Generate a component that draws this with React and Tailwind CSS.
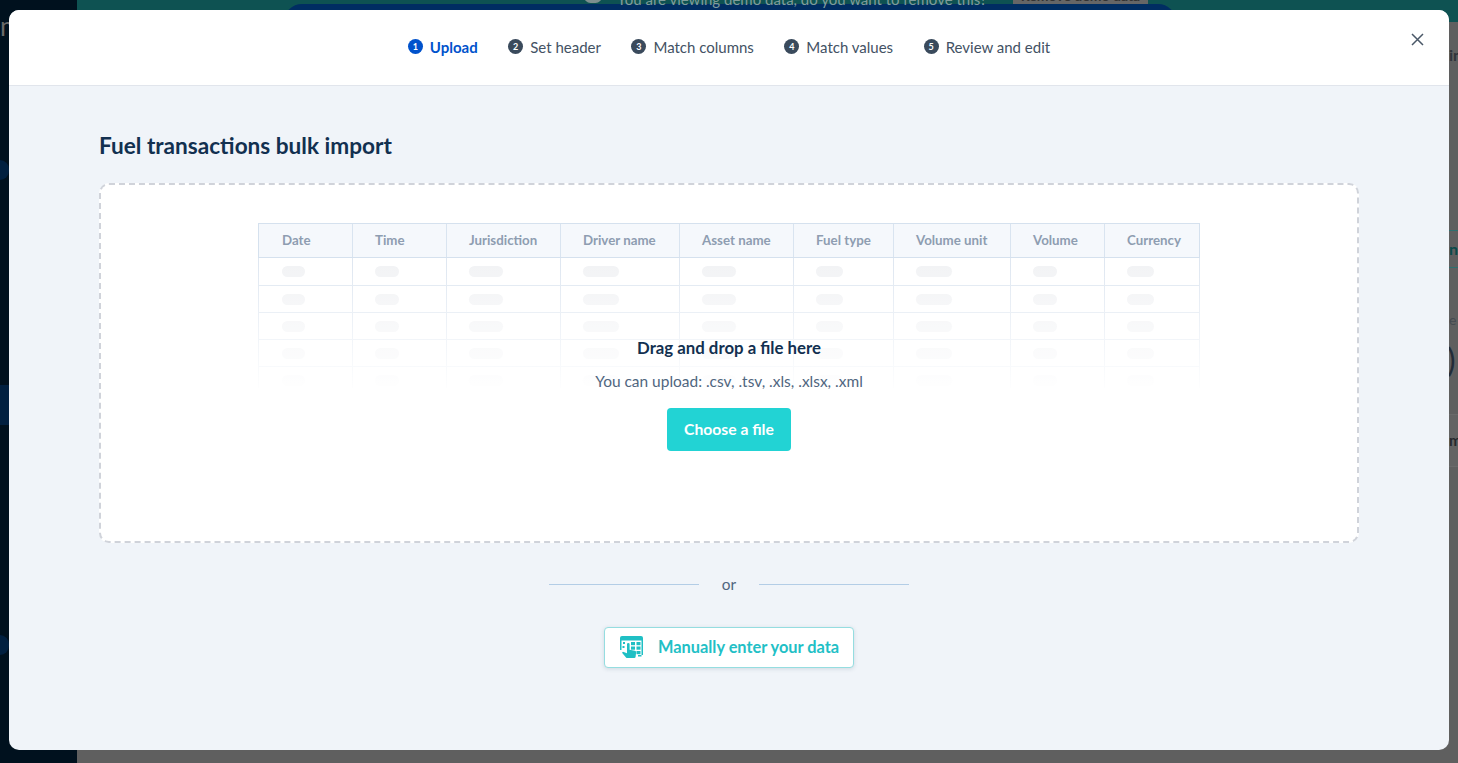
import React from "react";

const columns = [
  { name: "Date", w: "w-[93px]", bar: "w-[23px]" },
  { name: "Time", w: "w-[94px]", bar: "w-[24px]" },
  { name: "Jurisdiction", w: "w-[114px]", bar: "w-[34px]" },
  { name: "Driver name", w: "w-[119px]", bar: "w-[36px]" },
  { name: "Asset name", w: "w-[114px]", bar: "w-[34px]" },
  { name: "Fuel type", w: "w-[100px]", bar: "w-[27px]" },
  { name: "Volume unit", w: "w-[117px]", bar: "w-[36px]" },
  { name: "Volume", w: "w-[94px]", bar: "w-[24px]" },
  { name: "Currency", w: "w-[95px]", bar: "w-[27px]" },
];

const steps = [
  { n: 1, label: "Upload", active: true },
  { n: 2, label: "Set header" },
  { n: 3, label: "Match columns" },
  { n: 4, label: "Match values" },
  { n: 5, label: "Review and edit" },
];

const rows = [
  { id: 0, h: "h-[28px]" },
  { id: 1, h: "h-[27px]" },
  { id: 2, h: "h-[27px]" },
  { id: 3, h: "h-[27px]" },
  { id: 4, h: "h-[27px]" },
];

function Step({ n, label, active }) {
  return (
    <div className="flex items-center gap-[7px]">
      <span
        className={`flex h-[15px] w-[15px] items-center justify-center rounded-full text-[9px] font-bold leading-none text-white ${
          active ? "bg-[#0052cc]" : "bg-[#3a4a5c]"
        }`}
      >
        {n}
      </span>
      <span className={`text-[15px] leading-5 ${active ? "font-bold text-[#0052cc]" : "text-[#435264]"}`}>{label}</span>
    </div>
  );
}

function SheetIcon() {
  return (
    <svg width="23" height="22" viewBox="0 0 23 22" fill="none">
      <g fill="#1fbfc4">
        <path d="M2 0h19a2 2 0 0 1 2 2v2.600H0V2a2 2 0 0 1 2-2z" />
        <rect x="0" y="4" width="1.500" height="10" />
        <rect x="21.500" y="4" width="1.500" height="15" />
        <rect x="3" y="6" width="2" height="2" />
        <rect x="2.500" y="10" width="2" height="2" />
        <rect x="11" y="6" width="4" height="3.200" />
        <rect x="16.500" y="6" width="4" height="3.200" />
        <rect x="11" y="10.500" width="4" height="3.200" />
        <rect x="16.500" y="10.500" width="4" height="3.200" />
        <rect x="16.500" y="15" width="4" height="3.200" />
        <rect x="18" y="19" width="3.500" height="1.500" />
        <path d="M7 8.200a1.300 1.300 0 0 1 2.600 0v5.600l5.200 1c.9.2 1.400.9 1.300 1.700l-.5 4.300a1.300 1.300 0 0 1-1.300 1.200H7.200c-.5 0-.9-.2-1.200-.6l-4-4.600 1-1.100 4 1.600z" />
      </g>
    </svg>
  );
}

export default function App() {
  return (
    <div className="relative h-[763px] w-[1458px] overflow-hidden bg-[#5f5f5f] font-['Lato','Noto_Sans',sans-serif]">
      {/* page dimmed behind the dialog */}
      <div className="flex h-full">
        <aside className="flex h-full w-[77px] flex-col bg-[#00111e]">
          <span className="pt-[14px] text-[26px] leading-6 text-[#6a6a6a]">m</span>
          <div className="mt-[122px] h-[20px] w-[9px] rounded-r-full bg-[#012040]" />
          <div className="mt-[205px] h-[40px] w-[9px] bg-[#012040]" />
          <div className="mt-[210px] h-[20px] w-[9px] rounded-r-full bg-[#012040]" />
        </aside>
        <main className="flex-1">
          <div className="flex h-[22px] justify-center bg-[#0e5252] pr-[76px]">
            <div className="mt-[4px] h-[18px] w-[892px] rounded-t-[18px] bg-[#002d62]" />
          </div>
        </main>
      </div>
      <div className="absolute left-[584px] top-[-10px] h-[13px] w-[18px] rounded-full bg-[#7d8f8f]" />
      <div className="absolute left-[617px] top-[-11px] text-[15px] leading-5 text-[#7f9c9c]">You are viewing demo data, do you want to remove this?</div>
      <div className="absolute left-[1013px] top-[-12px] flex h-[16px] w-[135px] items-end justify-center bg-[#666666] text-[14px] font-bold leading-4 text-[#333]">Remove demo data</div>
      <div className="absolute left-[1449px] top-[45px] text-[16px] font-bold leading-5 text-[#30343a]">in</div>
      <div className="absolute left-[1449px] top-[230px] flex h-[38px] w-[9px] items-center border-y border-[#2f6f6f] text-[16px] font-bold text-[#0a4a4a]">n</div>
      <div className="absolute left-[1449px] top-[310px] text-[14px] leading-5 text-[#454a50]">e</div>
      <div className="absolute left-[1447px] top-[340px] text-[32px] leading-10 text-[#222c38]">)</div>
      <div className="absolute left-[1449px] top-[414px] flex h-[53px] w-[9px] items-center border-y border-[#6a6a6a] bg-[#636363] text-[15px] font-bold text-[#25282c]">m</div>

      {/* dialog */}
      <div className="absolute left-[9px] top-[10px] flex h-[740px] w-[1440px] flex-col overflow-hidden rounded-[10px] bg-[#f0f4f9]">
        <header className="relative flex h-[76px] shrink-0 items-center justify-center gap-[30.500px] border-b border-[#e1e5ec] bg-white pb-[2px]">
          {steps.map((s) => (
            <Step key={s.n} {...s} />
          ))}
          <button className="absolute right-[25px] top-[23px] text-[#4a5868]">
            <svg width="13" height="13" viewBox="0 0 13 13" fill="none" stroke="currentColor" strokeWidth="1.500">
              <path d="M1 1l11 11M12 1L1 12" />
            </svg>
          </button>
        </header>

        <div className="flex flex-col px-[90px]">
          <h1 className="mt-[45px] text-[22.600px] font-bold leading-[30px] text-[#123050]">Fuel transactions bulk import</h1>

          <section className="relative mt-[22px] h-[360px] w-[1260px] rounded-[10px] border-2 border-dashed border-[#d0d3da] bg-white pt-[38px]">
            <div className="relative mx-auto h-[165px] w-[942px] overflow-hidden">
              <div className="flex h-[35px] border border-[#d5e1ee] bg-[#f5f8fc]">
                {columns.map((c, i) => (
                  <div
                    key={c.name}
                    className={`${c.w} ${i ? "border-l border-[#d9e4f0] pl-[22px]" : "pl-[23px]"} flex shrink-0 items-center text-[13.300px] font-bold text-[#8e9db1]`}
                  >
                    {c.name}
                  </div>
                ))}
              </div>
              {rows.map((r) => (
                <div key={r.id} className={`flex ${r.h} border-x border-b border-[#dfe7f1]`}>
                  {columns.map((c, i) => (
                    <div key={c.name} className={`${c.w} ${i ? "border-l border-[#dfe7f1] pl-[22px]" : "pl-[23px]"} flex shrink-0 items-center`}>
                      <div className={`${c.bar} h-[11px] rounded-full bg-[#f2f3f5]`} />
                    </div>
                  ))}
                </div>
              ))}
              <div className="absolute inset-x-0 bottom-0 h-[125px] bg-gradient-to-b from-white/0 to-white/95" />
            </div>

            <div className="absolute inset-x-0 top-[150px] flex flex-col items-center">
              <p className="text-[16.800px] font-bold leading-[26px] text-[#123050]">Drag and drop a file here</p>
              <p className="mt-[7px] text-[15.460px] leading-[26px] text-[#506680]">You can upload: .csv, .tsv, .xls, .xlsx, .xml</p>
              <button className="mt-[14px] h-[43px] w-[124px] rounded-[4px] bg-[#22d3d4] text-[15.700px] font-bold text-white">Choose a file</button>
            </div>
          </section>

          <div className="mt-[31px] flex items-center justify-center">
            <div className="h-px w-[150px] bg-[#b3cde6]" />
            <span className="w-[60px] text-center text-[15.400px] leading-5 text-[#506680]">or</span>
            <div className="h-px w-[150px] bg-[#b3cde6]" />
          </div>

          <div className="mt-[33px] flex justify-center">
            <button className="flex h-[41px] w-[250px] items-center gap-[15px] rounded-[4px] border border-[#95dde0] bg-white pb-[1px] pl-[15px] shadow-[0_1px_4px_rgba(30,60,90,0.15)]">
              <SheetIcon />
              <span className="text-[16.360px] font-bold text-[#22bfc6]">Manually enter your data</span>
            </button>
          </div>
        </div>
      </div>
    </div>
  );
}
